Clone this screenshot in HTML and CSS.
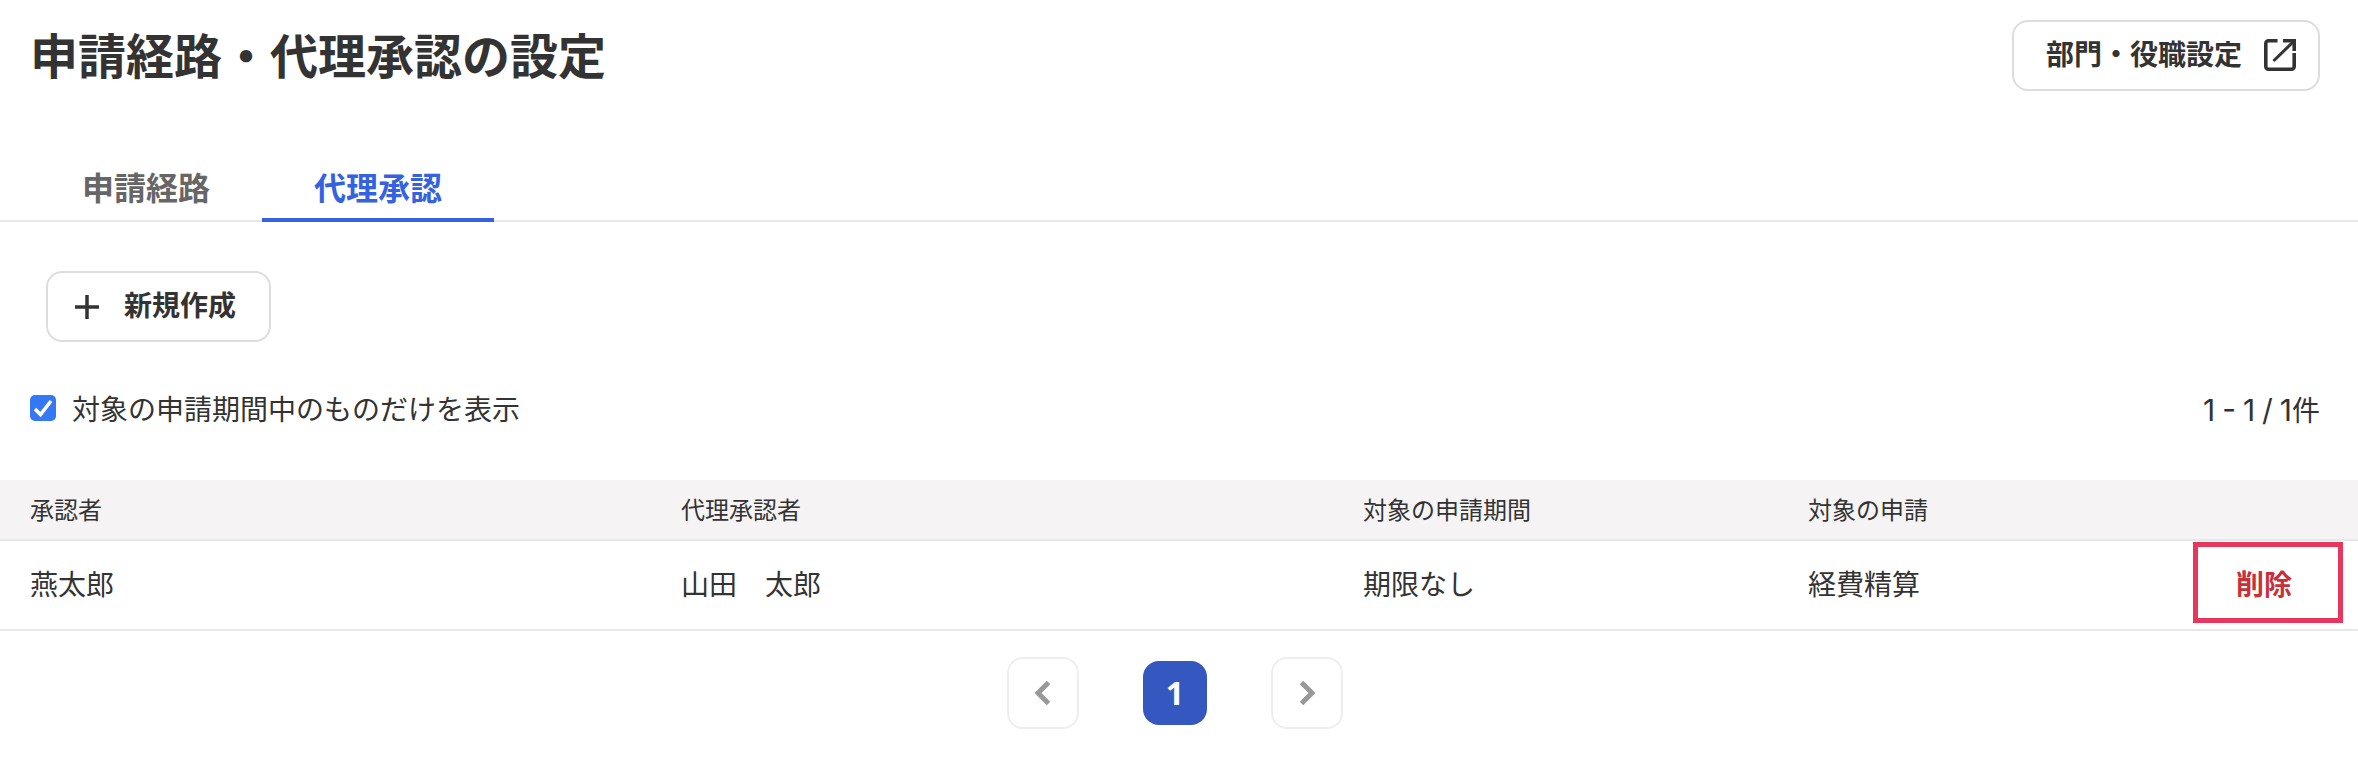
FILE: index.html
```html
<!DOCTYPE html>
<html lang="ja">
<head>
<meta charset="utf-8">
<title>申請経路・代理承認の設定</title>
<link rel="stylesheet" href="styles.css">
</head>
<body>
<header class="page-head">
  <h1 class="page-title">申請経路・代理承認の設定</h1>
  <button class="btn btn-link" type="button">
    <span class="btn-label">部門・役職設定</span>
    <svg class="icon-external" viewBox="0 0 32 32" fill="none" stroke="currentColor" stroke-width="3.6"><path d="M13.5 1.8H4.5a2.7 2.7 0 0 0-2.7 2.7V27.5a2.7 2.7 0 0 0 2.7 2.7H27.5a2.7 2.7 0 0 0 2.7-2.7V14"/><path d="M9.5 22L29.5 2.5" stroke-width="3"/><path d="M19 1.8H30.2V12"/></svg>
  </button>
</header>
<nav class="tabs">
  <a class="tab">申請経路</a>
  <a class="tab tab-active">代理承認</a>
</nav>
<div class="actions">
  <button class="btn btn-new" type="button">
    <svg class="icon-plus" viewBox="0 0 24 24" fill="none" stroke="currentColor" stroke-width="3.5"><path d="M12 0V24M0 12H24"/></svg>
    <span class="btn-label">新規作成</span>
  </button>
</div>
<div class="filter-row">
  <label class="filter"><input type="checkbox" checked><span>対象の申請期間中のものだけを表示</span></label>
  <div class="count">1 - 1 / 1<span class="count-unit">件</span></div>
</div>
<table class="grid">
  <colgroup><col class="c1"><col class="c2"><col class="c3"><col class="c4"><col></colgroup>
  <thead>
    <tr><th>承認者</th><th>代理承認者</th><th>対象の申請期間</th><th>対象の申請</th><th></th></tr>
  </thead>
  <tbody>
    <tr>
      <td>燕太郎</td><td>山田　太郎</td><td>期限なし</td><td>経費精算</td>
      <td class="cell-action"><a class="delete">削除</a><span class="highlight"></span></td>
    </tr>
  </tbody>
</table>
<nav class="pager">
  <button class="page-arrow" type="button"><svg viewBox="0 0 16 24" fill="none" stroke="currentColor" stroke-width="5"><path d="M13.5 1.5L3 12L13.5 22.5"/></svg></button>
  <button class="page-current" type="button">1</button>
  <button class="page-arrow" type="button"><svg viewBox="0 0 16 24" fill="none" stroke="currentColor" stroke-width="5"><path d="M2.5 1.5L13 12L2.5 22.5"/></svg></button>
</nav>
</body>
</html>
```
FILE: styles.css
```css
* { box-sizing: border-box; }
html, body { margin: 0; padding: 0; background: #fff; }
body {
  font-family: "Noto Sans", "Noto Sans CJK JP", sans-serif;
  color: #333;
  font-size: 28px;
}
.page-head {
  display: flex;
  justify-content: space-between;
  align-items: center;
  padding: 20px 38px 0 30px;
}
.page-title { margin: 0; font-size: 48px; line-height: 71px; font-weight: 700; }
.btn {
  display: inline-flex;
  align-items: center;
  height: 71px;
  background: #fff;
  border: 2px solid #ddd;
  border-radius: 16px;
  font: 700 28px/1 "Noto Sans", "Noto Sans CJK JP", sans-serif;
  color: #333;
}
.btn-label { padding-bottom: 3px; }
.btn-link { width: 308px; padding: 0 22px 0 32px; justify-content: space-between; }
.icon-external { width: 32px; height: 32px; display: block; margin-bottom: 2px; }
.tabs { display: flex; margin-top: 73px; padding-left: 30px; border-bottom: 2px solid #e8e8e8; height: 58px; }
.tab {
  width: 232px; height: 58px;
  padding-bottom: 6px;
  border-bottom: 4px solid transparent;
  font-size: 32px; font-weight: 700; line-height: 48px;
  text-align: center;
  color: #666;
}
.tab-active { color: #3563e0; border-bottom-color: #3563e0; }
.actions { padding: 49px 0 0 46px; }
.btn-new { width: 225px; padding: 0 0 0 27px; gap: 25px; }
.icon-plus { width: 24px; height: 24px; display: block; }
.filter-row {
  display: flex; justify-content: space-between; align-items: center;
  height: 40px; margin-top: 46px; padding: 0 38px 0 30px;
}
.filter { display: flex; align-items: center; gap: 16px; line-height: 40px; }
.filter span { padding-top: 2px; }
.filter input {
  appearance: none;
  width: 26px; height: 26px; margin: 0;
  border-radius: 5px;
  background: #3478f6 url("data:image/svg+xml,%3Csvg xmlns='http://www.w3.org/2000/svg' viewBox='0 0 26 26'%3E%3Cpath d='M5 14L10.5 19.5L21 6' fill='none' stroke='white' stroke-width='3.6'/%3E%3C/svg%3E") center / 26px 26px no-repeat;
}
.count { line-height: 40px; font-family: "Inter", "Noto Sans CJK JP", sans-serif; font-size: 30px; word-spacing: -1.5px; padding-top: 2px; }
.count-unit { font-family: "Noto Sans CJK JP", sans-serif; font-size: 28px; }
.grid { width: 100%; margin-top: 52px; border-collapse: separate; border-spacing: 0; table-layout: fixed; }
.c1 { width: 651px; } .c2 { width: 682px; } .c3 { width: 445px; } .c4 { width: 402px; }
th, td { padding: 0 0 0 30px; text-align: left; font-weight: 400; border-bottom: 2px solid #e8e8e8; }
th { height: 61px; font-size: 24px; background: #f5f3f4; padding-bottom: 2px; }
td { height: 90px; font-size: 28px; padding-bottom: 4px; }
.cell-action { position: relative; text-align: right; padding-right: 66px; }
.delete { font-weight: 700; color: #c8303a; }
.highlight {
  position: absolute; left: 13px; top: 1px; width: 150px; height: 81px;
  border: 5px solid #e8375f;
}
.pager { display: flex; justify-content: center; align-items: center; gap: 64px; margin-top: 26px; padding-right: 8px; }
.page-arrow {
  width: 72px; height: 72px; padding: 0;
  display: flex; align-items: center; justify-content: center;
  background: #fff; border: 2px solid #eee; border-radius: 16px; color: #999;
}
.page-arrow svg { width: 16px; height: 24px; display: block; }
.page-current {
  width: 64px; height: 64px; padding: 0;
  background: #3558c0; border: 0; border-radius: 16px; color: #fff;
  font: 700 32px/1 "Noto Sans", sans-serif;
}
```
